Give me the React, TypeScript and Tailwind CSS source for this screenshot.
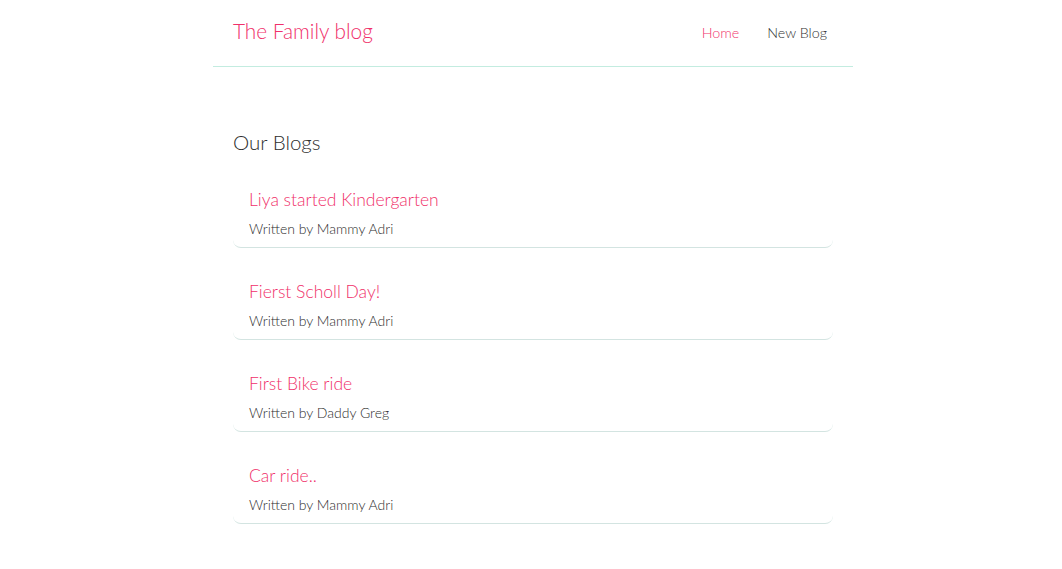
import React from 'react';

interface Blog {
  id: number;
  title: string;
  author: string;
}

const blogs: Blog[] = [
  { id: 1, title: 'Liya started Kindergarten', author: 'Mammy Adri' },
  { id: 2, title: 'Fierst Scholl Day!', author: 'Mammy Adri' },
  { id: 3, title: 'First Bike ride', author: 'Daddy Greg' },
  { id: 4, title: 'Car ride..', author: 'Mammy Adri' },
];

const Navbar: React.FC = () => (
  <nav className="mx-auto flex h-[67px] w-[640px] items-center justify-between border-b border-[#c3ece0] px-5">
    <h1 className="mb-[6px] text-[20.8px] font-light leading-[29px] text-[#f0306a]">The Family blog</h1>
    <div className="flex items-center gap-7 pr-1.5 text-[14.3px] font-light">
      <a href="#" className="text-[#f1356d]">Home</a>
      <a href="#" className="text-[#333]">New Blog</a>
    </div>
  </nav>
);

const BlogList: React.FC<{ items: Blog[]; title: string }> = ({ items, title }) => (
  <div>
    <h2 className="mb-[19px] text-[20.5px] font-light leading-[29px] text-[#2e2e2e]">{title}</h2>
    <div className="flex flex-col gap-5">
      {items.map((blog) => (
        <div key={blog.id} className="rounded-lg border-b border-[#d3e4e1] px-4 pb-[3px] pt-[10px]">
          <h2 className="text-[17.5px] font-light leading-[27px] text-[#f0306a]">{blog.title}</h2>
          <p className="text-[14px] font-light leading-[31px] text-[#2e2e2e]">Written by {blog.author}</p>
        </div>
      ))}
    </div>
  </div>
);

export default function App() {
  return (
    <div className="min-h-screen bg-white pl-1" style={{ fontFamily: 'Lato, "Noto Sans", sans-serif' }}>
      <Navbar />
      <main className="mx-auto w-[640px] px-5 pt-[61px]">
        <BlogList items={blogs} title="Our Blogs" />
      </main>
    </div>
  );
}
